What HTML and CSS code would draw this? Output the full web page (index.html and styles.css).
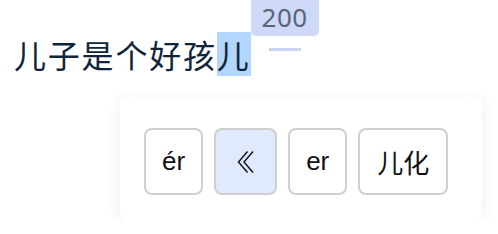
FILE: index.html
```html
<!DOCTYPE html>
<html lang="zh-CN">
<head>
    <meta charset="UTF-8">
    <meta name="viewport" content="width=device-width, initial-scale=1.0">
    <title>儿化</title>
    <link rel="stylesheet" href="styles.css">
</head>
<body>
    <div class="sentence-row">
        <div class="sentence">儿子是个好孩<span class="picked">儿</span></div>
        <div class="note">
            <div class="note-badge">200</div>
            <div class="note-line"></div>
        </div>
    </div>

    <div class="picker">
        <button class="choice">ér</button>
        <button class="choice active" title="back">
            <svg width="18" height="24" viewBox="0 0 18 24" fill="none" stroke="#161616" stroke-width="1.5">
                <polyline points="10.5,1.5 1.5,12 10.5,22.5"/>
                <polyline points="16,1.5 7,12 16,22.5"/>
            </svg>
        </button>
        <button class="choice">er</button>
        <button class="choice cjk">儿化</button>
    </div>
</body>
</html>
```

FILE: styles.css
```css
body {
    margin: 0;
    background: #fff;
    font-family: "Liberation Sans", Arial, "Noto Sans CJK SC", sans-serif;
}
.sentence-row {
    display: flex;
    align-items: flex-start;
    padding-left: 14px;
}
.sentence {
    margin-top: 32px;
    font-family: "Noto Sans CJK SC", sans-serif;
    font-size: 32px;
    letter-spacing: 1.8px;
    line-height: 44px;
    color: #10243a;
}
.picked {
    display: inline-block;
    height: 44px;
    background: #b3d6fd;
}
.note {
    display: flex;
    flex-direction: column;
    align-items: center;
    gap: 12px;
}
.note-badge {
    width: 68px;
    height: 36px;
    line-height: 34px;
    text-align: center;
    background: #cdd9f7;
    border-radius: 0 0 5px 5px;
    color: #5b6577;
    font-family: "Noto Sans", sans-serif;
    font-size: 26px;
    letter-spacing: 0.5px;
}
.note-line {
    width: 32px;
    height: 3px;
    background: #c8d5f3;
}
.picker {
    display: flex;
    gap: 11px;
    width: 314px;
    height: 67px;
    margin: 21px 0 0 120px;
    padding: 31px 24px 24px;
    background: #fff;
    border-radius: 6px;
    box-shadow: 0 3px 14px rgba(30, 40, 70, 0.09);
}
.choice {
    display: flex;
    align-items: center;
    justify-content: center;
    height: 67px;
    padding: 0 16px;
    background: #fff;
    border: 2px solid #cfcfcf;
    border-radius: 8px;
    font-family: inherit;
    font-size: 26px;
    color: #111;
}
.choice.active {
    width: 63px;
    background: #e0eafc;
}
.choice.cjk {
    font-family: "Noto Sans CJK SC", sans-serif;
    font-size: 26px;
    padding: 0 17px;
}
```
